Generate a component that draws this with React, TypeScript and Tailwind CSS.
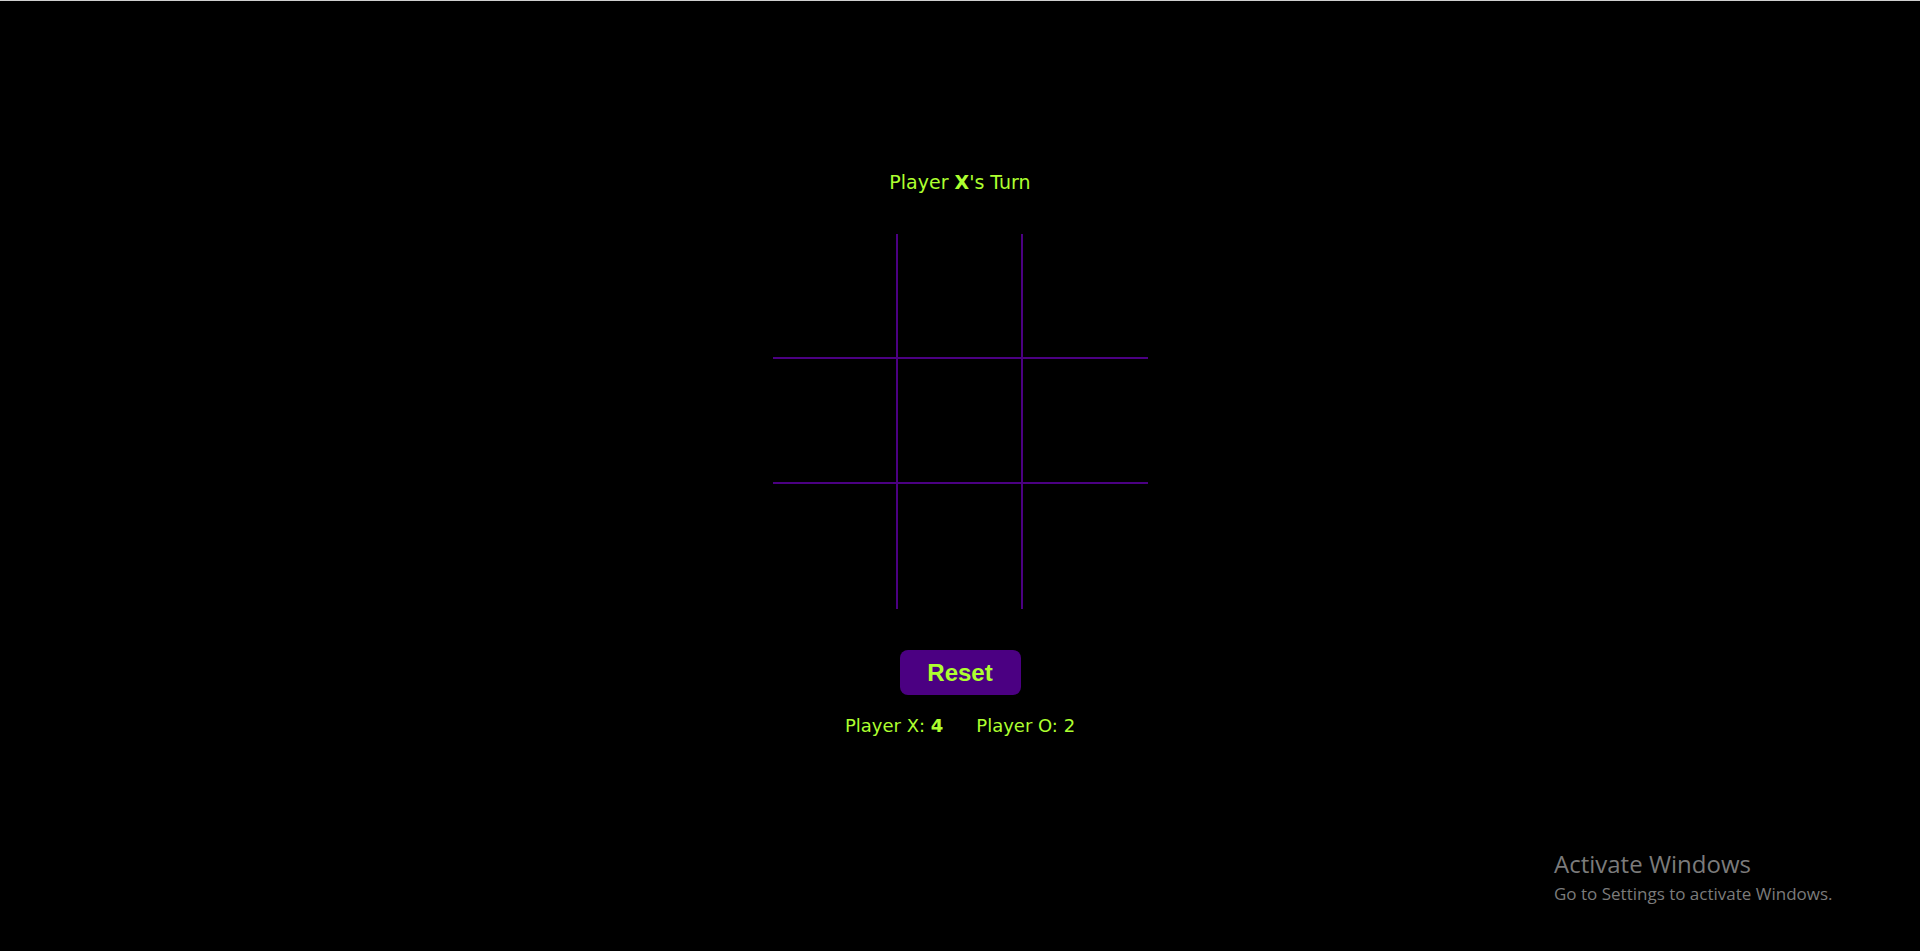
import React, { useState } from 'react';

type Cell = 'X' | 'O' | null;

export default function App() {
  const [board, setBoard] = useState<Cell[]>(Array(9).fill(null));
  const [turn, setTurn] = useState<'X' | 'O'>('X');
  const [score] = useState({ X: 4, O: 2 });

  const play = (i: number) => {
    if (board[i]) return;
    const next = [...board];
    next[i] = turn;
    setBoard(next);
    setTurn(turn === 'X' ? 'O' : 'X');
  };

  const reset = () => {
    setBoard(Array(9).fill(null));
    setTurn('X');
  };

  // inner grid lines: right border on first two columns, bottom border on first two rows
  const cellClass = (i: number) => {
    const col = i % 3;
    const row = Math.floor(i / 3);
    return [
      'flex items-center justify-center text-5xl font-bold text-[#adff2f] cursor-pointer',
      col < 2 ? 'w-[125px] border-r-2 border-r-[#4b0082]' : 'w-[125px]',
      row < 2 ? 'h-[125px] border-b-2 border-b-[#4b0082]' : 'h-[125px]',
    ].join(' ');
  };

  return (
    <div className="relative min-h-screen bg-black border-t border-[#cfcfcf] font-['Comic_Sans_MS','DejaVu_Sans',sans-serif] text-[#adff2f]">
      <div className="flex flex-col items-center pt-[168px]">
        <h1 className="text-[19px] leading-[26px]">
          Player <span className="font-bold">{turn}</span>'s Turn
        </h1>

        {/* BOARD */}
        <div className="mt-[39px] grid grid-cols-3 w-[375px]">
          {board.map((c, i) => (
            <div key={i} className={cellClass(i)} onClick={() => play(i)}>
              {c}
            </div>
          ))}
        </div>

        <button
          onClick={reset}
          className="mt-[41px] w-[121px] h-[45px] rounded-lg bg-[#4b0082] text-[#adff2f] font-['Liberation_Sans',Arial,sans-serif] font-bold text-[24px]"
        >
          Reset
        </button>

        {/* SCORES */}
        <div className="mt-[18px] flex gap-[33px] text-[18px] leading-[26px]">
          <span>Player X: <span className="font-bold">{score.X}</span></span>
          <span>Player O: {score.O}</span>
        </div>
      </div>

      {/* windows watermark */}
      <div className="absolute left-[1554px] top-[846px] text-[#7b7b7b] font-['Open_Sans','Noto_Sans',sans-serif] pointer-events-none">
        <p className="text-[24px] leading-[33px]">Activate Windows</p>
        <p className="mt-[2px] text-[17px] leading-[24px]">Go to Settings to activate Windows.</p>
      </div>
    </div>
  );
}
